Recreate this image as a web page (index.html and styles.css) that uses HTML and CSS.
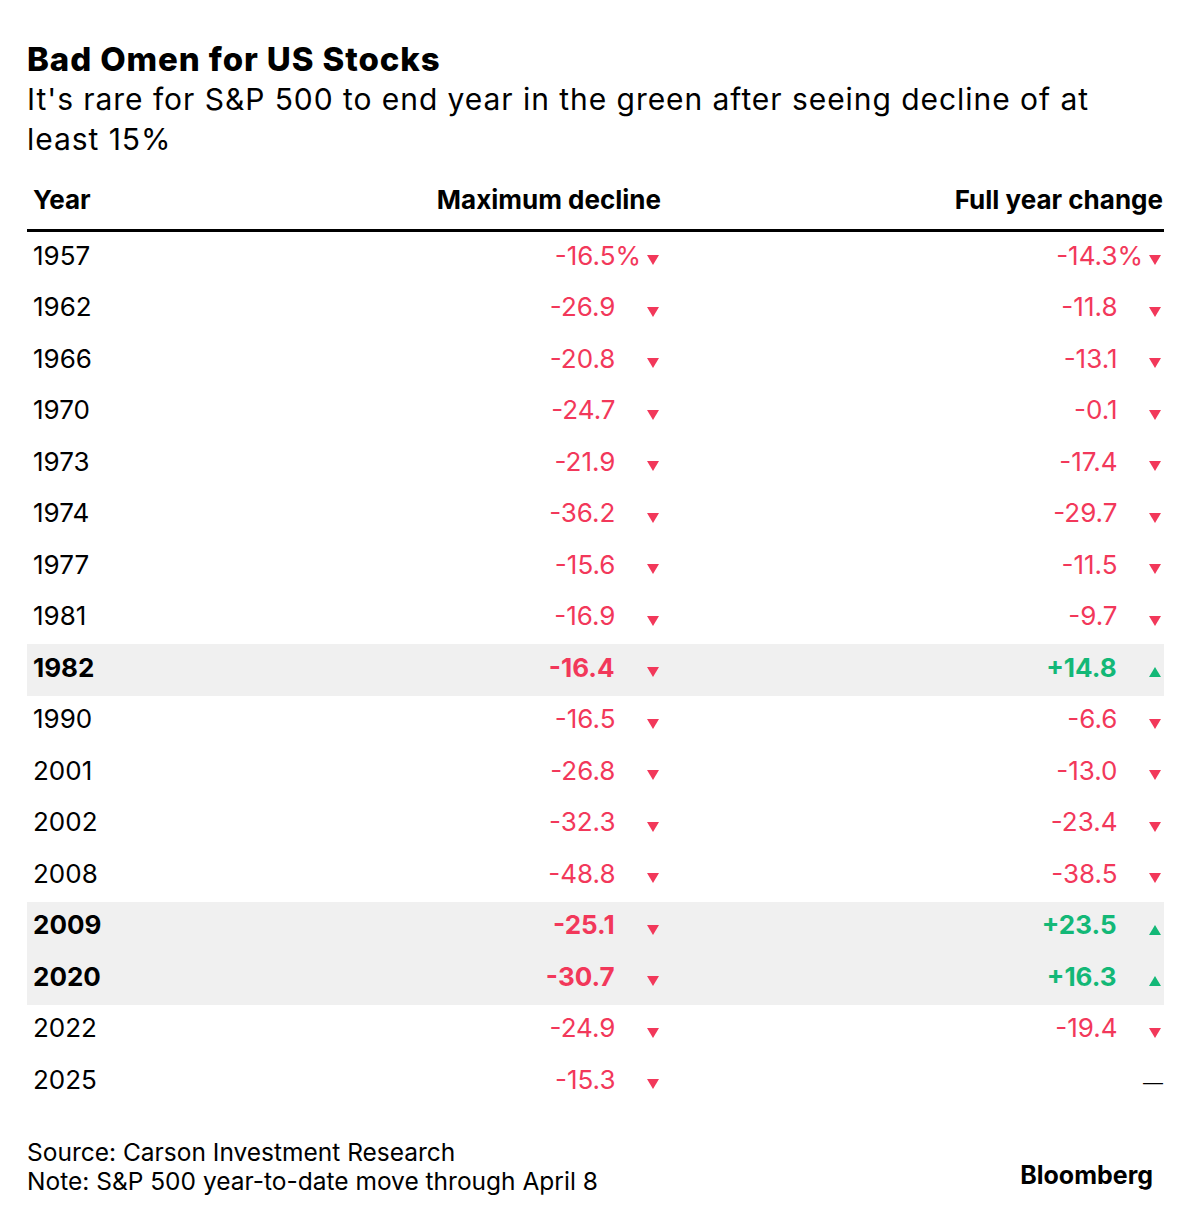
FILE: index.html
```html
<!DOCTYPE html>
<html>
<head>
<meta charset="utf-8">
<link rel="stylesheet" href="styles.css">
</head>
<body>
<div class="chart">
  <h1 class="title">Bad Omen for US Stocks</h1>
  <p class="subtitle">It's rare for S&amp;P 500 to end year in the green after seeing decline of at least 15%</p>
  <div class="table">
    <div class="row head">
      <div class="c-year">Year</div>
      <div class="c-val">Maximum decline</div>
      <div class="c-val">Full year change</div>
    </div>
    <div class="row">
      <div class="c-year">1957</div>
      <div class="c-val neg"><span>-16.5</span><span class="pct">%</span><span class="tri down"></span></div>
      <div class="c-val neg"><span>-14.3</span><span class="pct">%</span><span class="tri down"></span></div>
    </div>
    <div class="row">
      <div class="c-year">1962</div>
      <div class="c-val neg"><span>-26.9</span><span class="pct hid">%</span><span class="tri down"></span></div>
      <div class="c-val neg"><span>-11.8</span><span class="pct hid">%</span><span class="tri down"></span></div>
    </div>
    <div class="row">
      <div class="c-year">1966</div>
      <div class="c-val neg"><span>-20.8</span><span class="pct hid">%</span><span class="tri down"></span></div>
      <div class="c-val neg"><span>-13.1</span><span class="pct hid">%</span><span class="tri down"></span></div>
    </div>
    <div class="row">
      <div class="c-year">1970</div>
      <div class="c-val neg"><span>-24.7</span><span class="pct hid">%</span><span class="tri down"></span></div>
      <div class="c-val neg"><span>-0.1</span><span class="pct hid">%</span><span class="tri down"></span></div>
    </div>
    <div class="row">
      <div class="c-year">1973</div>
      <div class="c-val neg"><span>-21.9</span><span class="pct hid">%</span><span class="tri down"></span></div>
      <div class="c-val neg"><span>-17.4</span><span class="pct hid">%</span><span class="tri down"></span></div>
    </div>
    <div class="row">
      <div class="c-year">1974</div>
      <div class="c-val neg"><span>-36.2</span><span class="pct hid">%</span><span class="tri down"></span></div>
      <div class="c-val neg"><span>-29.7</span><span class="pct hid">%</span><span class="tri down"></span></div>
    </div>
    <div class="row">
      <div class="c-year">1977</div>
      <div class="c-val neg"><span>-15.6</span><span class="pct hid">%</span><span class="tri down"></span></div>
      <div class="c-val neg"><span>-11.5</span><span class="pct hid">%</span><span class="tri down"></span></div>
    </div>
    <div class="row">
      <div class="c-year">1981</div>
      <div class="c-val neg"><span>-16.9</span><span class="pct hid">%</span><span class="tri down"></span></div>
      <div class="c-val neg"><span>-9.7</span><span class="pct hid">%</span><span class="tri down"></span></div>
    </div>
    <div class="row hl">
      <div class="c-year">1982</div>
      <div class="c-val neg"><span>-16.4</span><span class="pct hid">%</span><span class="tri down"></span></div>
      <div class="c-val pos"><span>+14.8</span><span class="pct hid">%</span><span class="tri up"></span></div>
    </div>
    <div class="row">
      <div class="c-year">1990</div>
      <div class="c-val neg"><span>-16.5</span><span class="pct hid">%</span><span class="tri down"></span></div>
      <div class="c-val neg"><span>-6.6</span><span class="pct hid">%</span><span class="tri down"></span></div>
    </div>
    <div class="row">
      <div class="c-year">2001</div>
      <div class="c-val neg"><span>-26.8</span><span class="pct hid">%</span><span class="tri down"></span></div>
      <div class="c-val neg"><span>-13.0</span><span class="pct hid">%</span><span class="tri down"></span></div>
    </div>
    <div class="row">
      <div class="c-year">2002</div>
      <div class="c-val neg"><span>-32.3</span><span class="pct hid">%</span><span class="tri down"></span></div>
      <div class="c-val neg"><span>-23.4</span><span class="pct hid">%</span><span class="tri down"></span></div>
    </div>
    <div class="row">
      <div class="c-year">2008</div>
      <div class="c-val neg"><span>-48.8</span><span class="pct hid">%</span><span class="tri down"></span></div>
      <div class="c-val neg"><span>-38.5</span><span class="pct hid">%</span><span class="tri down"></span></div>
    </div>
    <div class="row hl">
      <div class="c-year">2009</div>
      <div class="c-val neg"><span>-25.1</span><span class="pct hid">%</span><span class="tri down"></span></div>
      <div class="c-val pos"><span>+23.5</span><span class="pct hid">%</span><span class="tri up"></span></div>
    </div>
    <div class="row hl">
      <div class="c-year">2020</div>
      <div class="c-val neg"><span>-30.7</span><span class="pct hid">%</span><span class="tri down"></span></div>
      <div class="c-val pos"><span>+16.3</span><span class="pct hid">%</span><span class="tri up"></span></div>
    </div>
    <div class="row">
      <div class="c-year">2022</div>
      <div class="c-val neg"><span>-24.9</span><span class="pct hid">%</span><span class="tri down"></span></div>
      <div class="c-val neg"><span>-19.4</span><span class="pct hid">%</span><span class="tri down"></span></div>
    </div>
    <div class="row">
      <div class="c-year">2025</div>
      <div class="c-val neg"><span>-15.3</span><span class="pct hid">%</span><span class="tri down"></span></div>
      <div class="c-val"><span class="dash">—</span></div>
    </div>
  </div>
  <div class="footer">
    <div class="notes">
      <div>Source: Carson Investment Research</div>
      <div>Note: S&amp;P 500 year-to-date move through April 8</div>
    </div>
    <div class="logo">Bloomberg</div>
  </div>
</div>
</body>
</html>
```

FILE: styles.css
```css
* { box-sizing: border-box; }
body {
  margin: 0;
  background: #fff;
  font-family: "Inter", "Liberation Sans", Arial, sans-serif;
  color: #000;
}
.chart {
  padding: 39px 27px 0 27px;
}
.title {
  margin: 0;
  font-size: 33px;
  font-weight: 800;
  line-height: 40px;
  letter-spacing: 0.9px;
}
.subtitle {
  margin: 0;
  font-size: 30px;
  line-height: 40px;
  letter-spacing: 0.95px;
  max-width: 1100px;
}
.table {
  width: 1137px;
}
.row {
  display: grid;
  grid-template-columns: 1fr 300px 502px;
  height: 51.5px;
  padding-bottom: 4px;
  align-items: center;
  font-size: 26px;
  line-height: 30px;
}
.row.head {
  height: auto;
  padding-top: 26px;
  padding-bottom: 14px;
  font-weight: 700;
  border-bottom: 3px solid #000;
}
.row.hl {
  background: #f0f0f0;
  font-weight: 700;
}
.c-year {
  padding-left: 6px;
}
.c-val {
  display: flex;
  justify-content: flex-end;
  align-items: center;
}
.head .c-val { padding-right: 1px; }
.neg { color: #f2385a; }
.pos { color: #13b877; }
.pct.hid { visibility: hidden; }
.tri {
  width: 0;
  height: 0;
  margin-left: 6px;
  margin-right: 3px;
  margin-top: 9px;
  border-left: 6px solid transparent;
  border-right: 6px solid transparent;
}
.tri.down { border-top: 10px solid #f2385a; }
.tri.up { border-bottom: 10px solid #13b877; }
.dash {
  color: #000;
  font-family: "Liberation Sans", Arial, sans-serif;
  font-weight: normal;
  font-size: 20px;
  margin-top: 4px;
  padding-right: 1px;
}
.footer {
  display: flex;
  justify-content: space-between;
  align-items: flex-end;
  margin-top: 30px;
  width: 1137px;
}
.notes {
  font-size: 24.5px;
  line-height: 29.5px;
}
.logo {
  font-size: 25px;
  font-weight: 700;
  line-height: 30px;
  padding-right: 11px;
  margin-bottom: 7px;
}
```
